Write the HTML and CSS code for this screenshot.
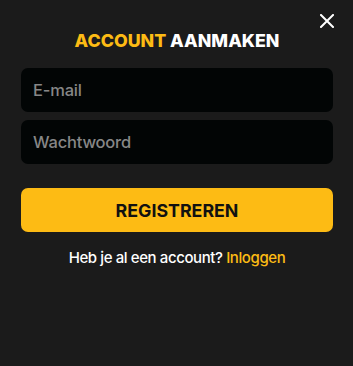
FILE: index.html
```html
<!DOCTYPE html>
<html lang="nl">
<head>
<meta charset="utf-8">
<link rel="stylesheet" href="styles.css">
</head>
<body>
<div class="modal">
  <button class="close" aria-label="Sluiten">
    <svg width="14" height="14" viewBox="0 0 14 14"><path d="M1 1L13 13M13 1L1 13" stroke="#fff" stroke-width="2" stroke-linecap="square"/></svg>
  </button>
  <h1 class="title"><span class="accent">ACCOUNT</span> AANMAKEN</h1>
  <form class="form">
    <input class="field" type="email" placeholder="E-mail">
    <input class="field" type="password" placeholder="Wachtwoord">
    <button class="submit" type="button">REGISTREREN</button>
  </form>
  <p class="login">Heb je al een account? <a class="accent" href="#">Inloggen</a></p>
</div>
</body>
</html>
```
FILE: styles.css
```css
html, body {
  margin: 0;
  padding: 0;
  background: #1b1b1b;
}
body {
  font-family: Inter, "Noto Sans", sans-serif;
  color: #fff;
}
.modal {
  position: relative;
  width: 353px;
  height: 366px;
  box-sizing: border-box;
  padding: 30px 20px 0 21px;
}
.close {
  position: absolute;
  top: 14px;
  right: 19px;
  padding: 0;
  border: 0;
  background: none;
  width: 14px;
  height: 14px;
  display: block;
}
.close svg { display: block; }
.title {
  margin: 0;
  text-align: center;
  font-size: 17.8px;
  font-weight: 800;
  line-height: 22px;
  letter-spacing: 0;
}
.accent { color: #fdbb14; text-decoration: none; }
.form {
  margin-top: 16px;
  display: flex;
  flex-direction: column;
}
.field {
  height: 44px;
  box-sizing: border-box;
  border: 0;
  border-radius: 7px;
  background: #020505;
  padding: 0 12px;
  font-family: inherit;
  font-size: 16.5px;
  font-weight: 500;
  letter-spacing: -0.2px;
  color: #fff;
  margin-bottom: 8px;
  outline: none;
}
.field::placeholder { color: #878787; }
.submit {
  margin-top: 16px;
  height: 44px;
  border: 0;
  border-radius: 7px;
  background: #fdbb14;
  color: #111;
  font-family: inherit;
  font-size: 17.8px;
  font-weight: 700;
}
.login {
  margin: 16px 0 0;
  text-align: center;
  font-size: 15px;
  font-weight: 500;
  letter-spacing: -0.4px;
  line-height: 20px;
}
```
